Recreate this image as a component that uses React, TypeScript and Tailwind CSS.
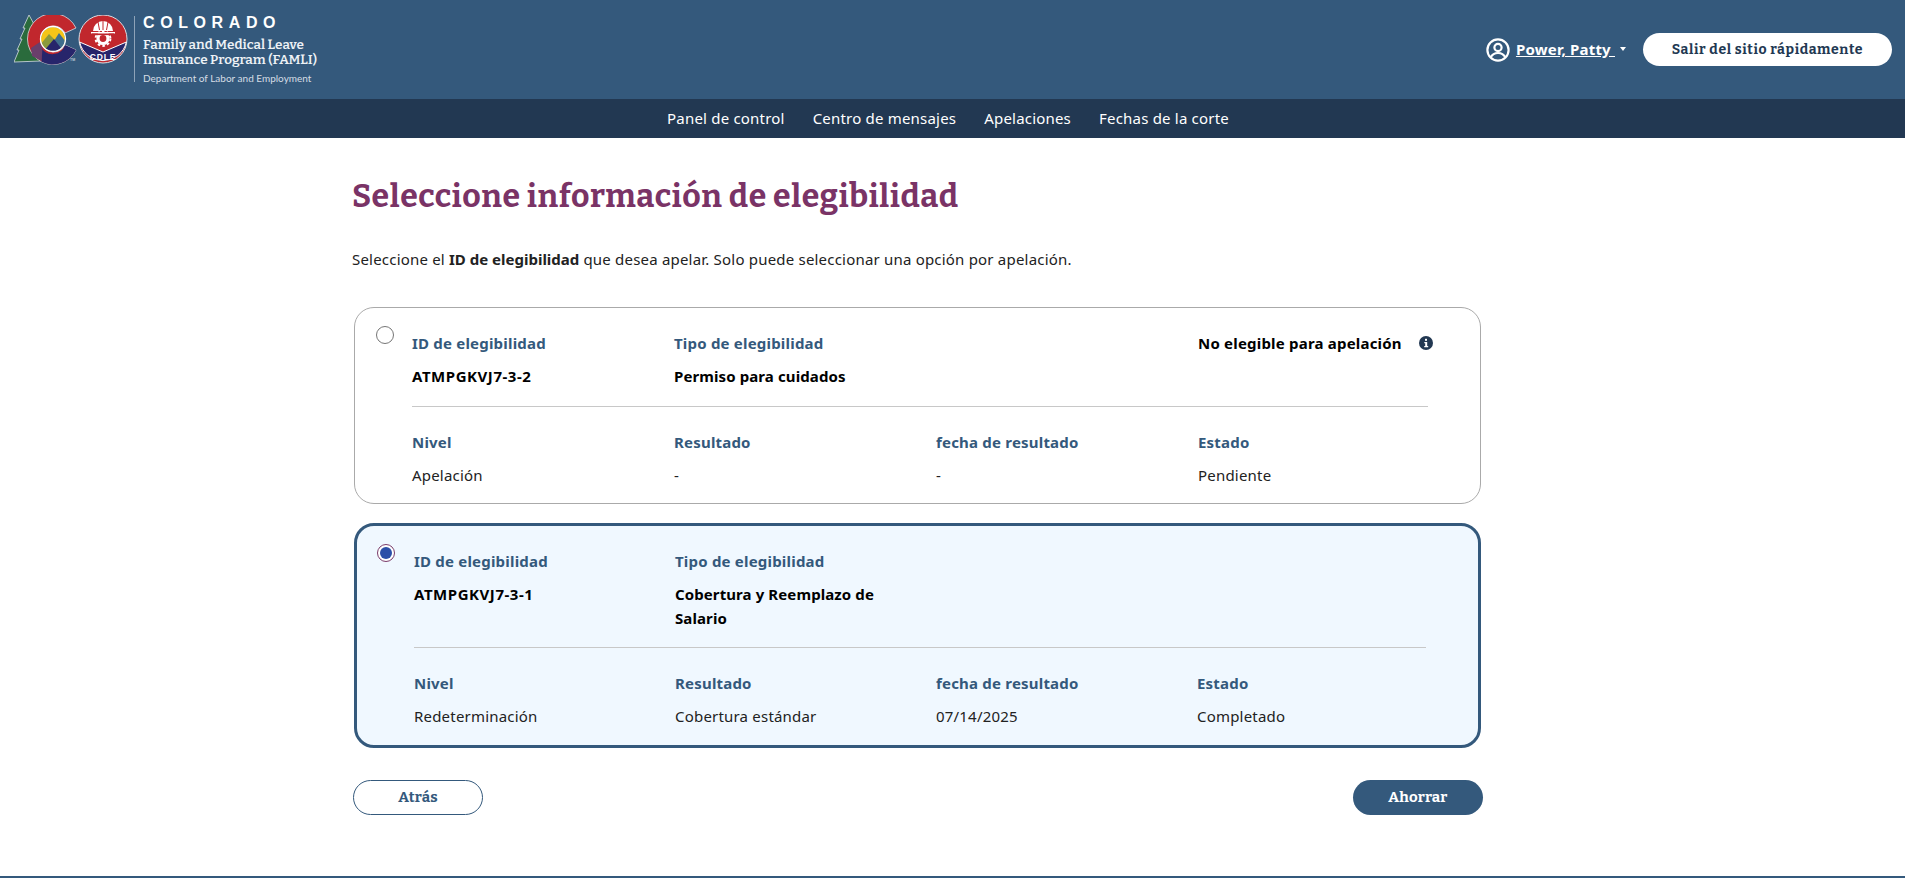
const slab = "font-['Bitter','DejaVu_Serif',serif]";

type Cell = { label: string; value: string; strong?: boolean; wide?: boolean };

function UserIcon() {
  return (
    <svg width="24" height="24" viewBox="0 0 24 24" fill="none" stroke="white" strokeWidth="2.2">
      <circle cx="12" cy="12" r="10.6" />
      <circle cx="12" cy="9.5" r="3.6" />
      <path d="M4.6 19.4c1.6-3 4.2-4.4 7.4-4.4s5.8 1.4 7.4 4.4" />
    </svg>
  );
}

function Logo() {
  return (
    <svg width="116" height="50" viewBox="0 0 116 50" className="shrink-0">
      <defs>
        <clipPath id="sun">
          <circle cx="39" cy="24" r="12" />
        </clipPath>
      </defs>
      {/* tree */}
      <path d="M15 0 L21 11 L19 11 L24 21 L22 21 L27 46 L0 47 L5 35 L3 35 L8 24 L6 24 L11 13 L9 13 Z" fill="#2a6b3c" stroke="#d8dde2" strokeWidth="0.8" />
      {/* the C */}
      <path d="M62 13 A25.5 25.5 0 1 0 62 35 L51 30 A13 13 0 1 1 51 18 Z" fill="#c1272d" stroke="#d8dde2" strokeWidth="0.8" />
      <path d="M62 35 A25.5 25.5 0 0 1 27.5 46.7 L27 32 A13 13 0 0 0 51 30 Z" fill="#27256b" />
      <path d="M18 41 L17 33 L26 27 L28.5 33 L27.5 46 Z" fill="#6a3f6b" />
      <g clipPath="url(#sun)">
        <rect x="26" y="11" width="26" height="26" fill="#f5c518" />
        <path d="M26 30 L35 19 L41 25 L38 37 L26 37 Z" fill="#8b9a3c" />
        <path d="M40 26 L45 18 L52 27 L52 37 L40 37 Z" fill="#3f6d8c" />
        <path d="M29 37 L40 24 L50 37 Z" fill="#27256b" />
      </g>
      <circle cx="39" cy="24" r="12.5" fill="none" stroke="#ffffff" strokeWidth="1.3" />
      <text x="56" y="46" fill="#e8ecf0" fontSize="3.5" fontFamily="Liberation Sans, sans-serif">TM</text>
      {/* CDLE seal */}
      <circle cx="89" cy="24" r="24" fill="#c1272d" stroke="#d8dde2" strokeWidth="1" />
      <path d="M65.6 27 L89 37 L112.4 27 A24 24 0 0 1 65.6 27 Z" fill="#27256b" stroke="#ffffff" strokeWidth="1" />
      <path d="M79 16 A10 10 0 0 1 99 16 Z" fill="#ffffff" />
      <path d="M84 7 L85.5 15 M89 6 L89 15 M94 7 L92.5 15" stroke="#c1272d" strokeWidth="1" />
      <path d="M77 17 h24 v1.5 h-24 Z" fill="#ffffff" />
      <circle cx="89" cy="23.5" r="5" fill="none" stroke="#ffffff" strokeWidth="3.2" />
      <circle cx="89" cy="23.5" r="7.4" fill="none" stroke="#ffffff" strokeWidth="2" strokeDasharray="2.6 2.2" />
      <rect x="78" y="18.5" width="22" height="1.6" fill="#c1272d" />
      <text x="89" y="45" textAnchor="middle" fill="#ffffff" fontSize="8.5" fontWeight="700" letterSpacing="0.8" fontFamily="Liberation Sans, sans-serif">CDLE</text>
    </svg>
  );
}

function Info() {
  return (
    <svg width="14" height="14" viewBox="0 0 14 14" className="ml-[17px] shrink-0">
      <circle cx="7" cy="7" r="7" fill="#223852" />
      <rect x="6" y="2.8" width="2" height="2" fill="white" />
      <path d="M5.3 6h2.9v4h1v1.2H5.2V10h1V7.2h-.9Z" fill="white" />
    </svg>
  );
}

function Field({ label, value, strong, wide }: Cell) {
  return (
    <div className="pr-[24px]">
      <div className="text-[15px] leading-[24px] font-bold text-[#34597c]">{label}</div>
      <div className={`mt-[9px] text-[15px] leading-[24px] ${strong ? "font-bold text-black" : "text-[#222]"} ${strong && !wide ? "tracking-[0.1px]" : ""} ${wide ? "tracking-[0.55px]" : ""}`}>
        {value}
      </div>
    </div>
  );
}

function EligibilityCard({ selected, top, bottom, extra }: { selected?: boolean; top: Cell[]; bottom: Cell[]; extra?: boolean }) {
  return (
    <div className={`mx-[2px] flex rounded-[20px] ${selected ? "mt-[19px] border-[3px] border-[#34597c] bg-[#f0f8ff] pt-[23px] pb-[17px] pl-[20px]" : "border border-[#aaa] bg-white pt-[23px] pb-[16px] pl-[21px]"}`}>
      <div className={selected ? "-mt-[5px] w-[37px] shrink-0" : "-mt-[5px] w-[36px] shrink-0"}>
        {selected ? (
          <div className="flex h-[18px] w-[18px] items-center justify-center rounded-full border border-[#7a3b69] bg-white">
            <div className="h-[12px] w-[12px] rounded-full bg-[#2b4fa8]" />
          </div>
        ) : (
          <div className="h-[18px] w-[18px] rounded-full border border-[#767676] bg-white" />
        )}
      </div>
      <div className={selected ? "w-[1012px]" : "w-[1016px]"}>
        <div className={`grid border-b border-[#c8c8c8] ${selected ? "grid-cols-[261px_261px_261px_1fr] pb-[17px]" : "grid-cols-[262px_262px_262px_1fr] pb-[18px]"}`}>
          {top.map((c) => (
            <Field key={c.label} {...c} strong />
          ))}
          {extra && (
            <>
              <div />
              <div className="flex h-[24px] items-center whitespace-nowrap text-[15px] font-bold text-black">
                No elegible para apelación
                <Info />
              </div>
            </>
          )}
        </div>
        <div className={`grid pt-[23px] ${selected ? "grid-cols-[261px_261px_261px_1fr]" : "grid-cols-[262px_262px_262px_1fr]"}`}>
          {bottom.map((c) => (
            <Field key={c.label} {...c} />
          ))}
        </div>
      </div>
    </div>
  );
}

export default function App() {
  return (
    <div className="flex h-[878px] flex-col overflow-hidden bg-white font-['Noto_Sans',sans-serif] tracking-[0.2px] text-[#222]">
      <header className="flex h-[99px] items-start justify-between bg-[#34597c] pl-[14px] pr-[13px]">
        <div className="flex pt-[15px]">
          <Logo />
          <div className="ml-[4px] mt-[1px] h-[66px] w-px bg-[#8ea3b8]" />
          <div className="pl-[8px] text-white">
            <div className="text-[16px] font-bold leading-[15px] tracking-[0.35em] font-['Liberation_Sans',sans-serif]">COLORADO</div>
            <div className={`${slab} mt-[8px] text-[13.5px] font-semibold tracking-normal leading-[14.5px] text-[#eef2f6]`}>
              Family and Medical Leave
              <br />
              Insurance Program (FAMLI)
            </div>
            <div className="mt-[5px] text-[10px] tracking-normal leading-[12px] text-[#d5dde5] font-['Lato',sans-serif]">Department of Labor and Employment</div>
          </div>
        </div>
        <div className="flex items-center pt-[33px]">
          <UserIcon />
          <a className="-mt-[1px] ml-[6px] text-[15px] font-bold leading-[20px] text-white underline">Power, Patty&nbsp;</a>
          <span className="-mt-[2px] ml-[5px] mr-[17px] h-0 w-0 border-x-[3px] border-t-[4px] border-x-transparent border-t-white" />
          <button className={`${slab} h-[33px] w-[249px] rounded-full bg-white text-[14px] font-bold tracking-[0.6px] text-[#223852]`}>
            Salir del sitio rápidamente
          </button>
        </div>
      </header>

      <nav className="flex h-[39px] items-center justify-center gap-[28px] bg-[#223852] pr-[9px] text-[15px] tracking-[0.2px] text-white">
        <a>Panel de control</a>
        <a>Centro de mensajes</a>
        <a>Apelaciones</a>
        <a>Fechas de la corte</a>
      </nav>

      <main className="ml-[352px] flex w-[1131px] flex-1 flex-col pt-[36px]">
        <h1 className={`${slab} text-[32px] font-bold leading-[44px] tracking-[0.55px] text-[#7a3366]`}>Seleccione información de elegibilidad</h1>
        <p className="mt-[29px] text-[15px] leading-[24px]">
          Seleccione el <b className="tracking-normal">ID de elegibilidad</b> que desea apelar. Solo puede seleccionar una opción por apelación.
        </p>
        <div className="mt-[36px]">
          <EligibilityCard
            extra
            top={[
              { label: "ID de elegibilidad", value: "ATMPGKVJ7-3-2", wide: true },
              { label: "Tipo de elegibilidad", value: "Permiso para cuidados" },
            ]}
            bottom={[
              { label: "Nivel", value: "Apelación" },
              { label: "Resultado", value: "-" },
              { label: "fecha de resultado", value: "-" },
              { label: "Estado", value: "Pendiente" },
            ]}
          />
          <EligibilityCard
            selected
            top={[
              { label: "ID de elegibilidad", value: "ATMPGKVJ7-3-1", wide: true },
              { label: "Tipo de elegibilidad", value: "Cobertura y Reemplazo de Salario" },
            ]}
            bottom={[
              { label: "Nivel", value: "Redeterminación" },
              { label: "Resultado", value: "Cobertura estándar" },
              { label: "fecha de resultado", value: "07/14/2025" },
              { label: "Estado", value: "Completado" },
            ]}
          />
        </div>
        <div className="mt-[32px] flex justify-between pl-[1px]">
          <button className={`${slab} h-[35px] w-[130px] rounded-full border border-[#34597c] bg-white text-[15px] font-bold text-[#34597c]`}>Atrás</button>
          <button className={`${slab} h-[35px] w-[130px] rounded-full bg-[#34597c] text-[15px] font-bold text-white`}>Ahorrar</button>
        </div>
      </main>

      <div className="h-[2px] bg-[#34597c]" />
    </div>
  );
}
